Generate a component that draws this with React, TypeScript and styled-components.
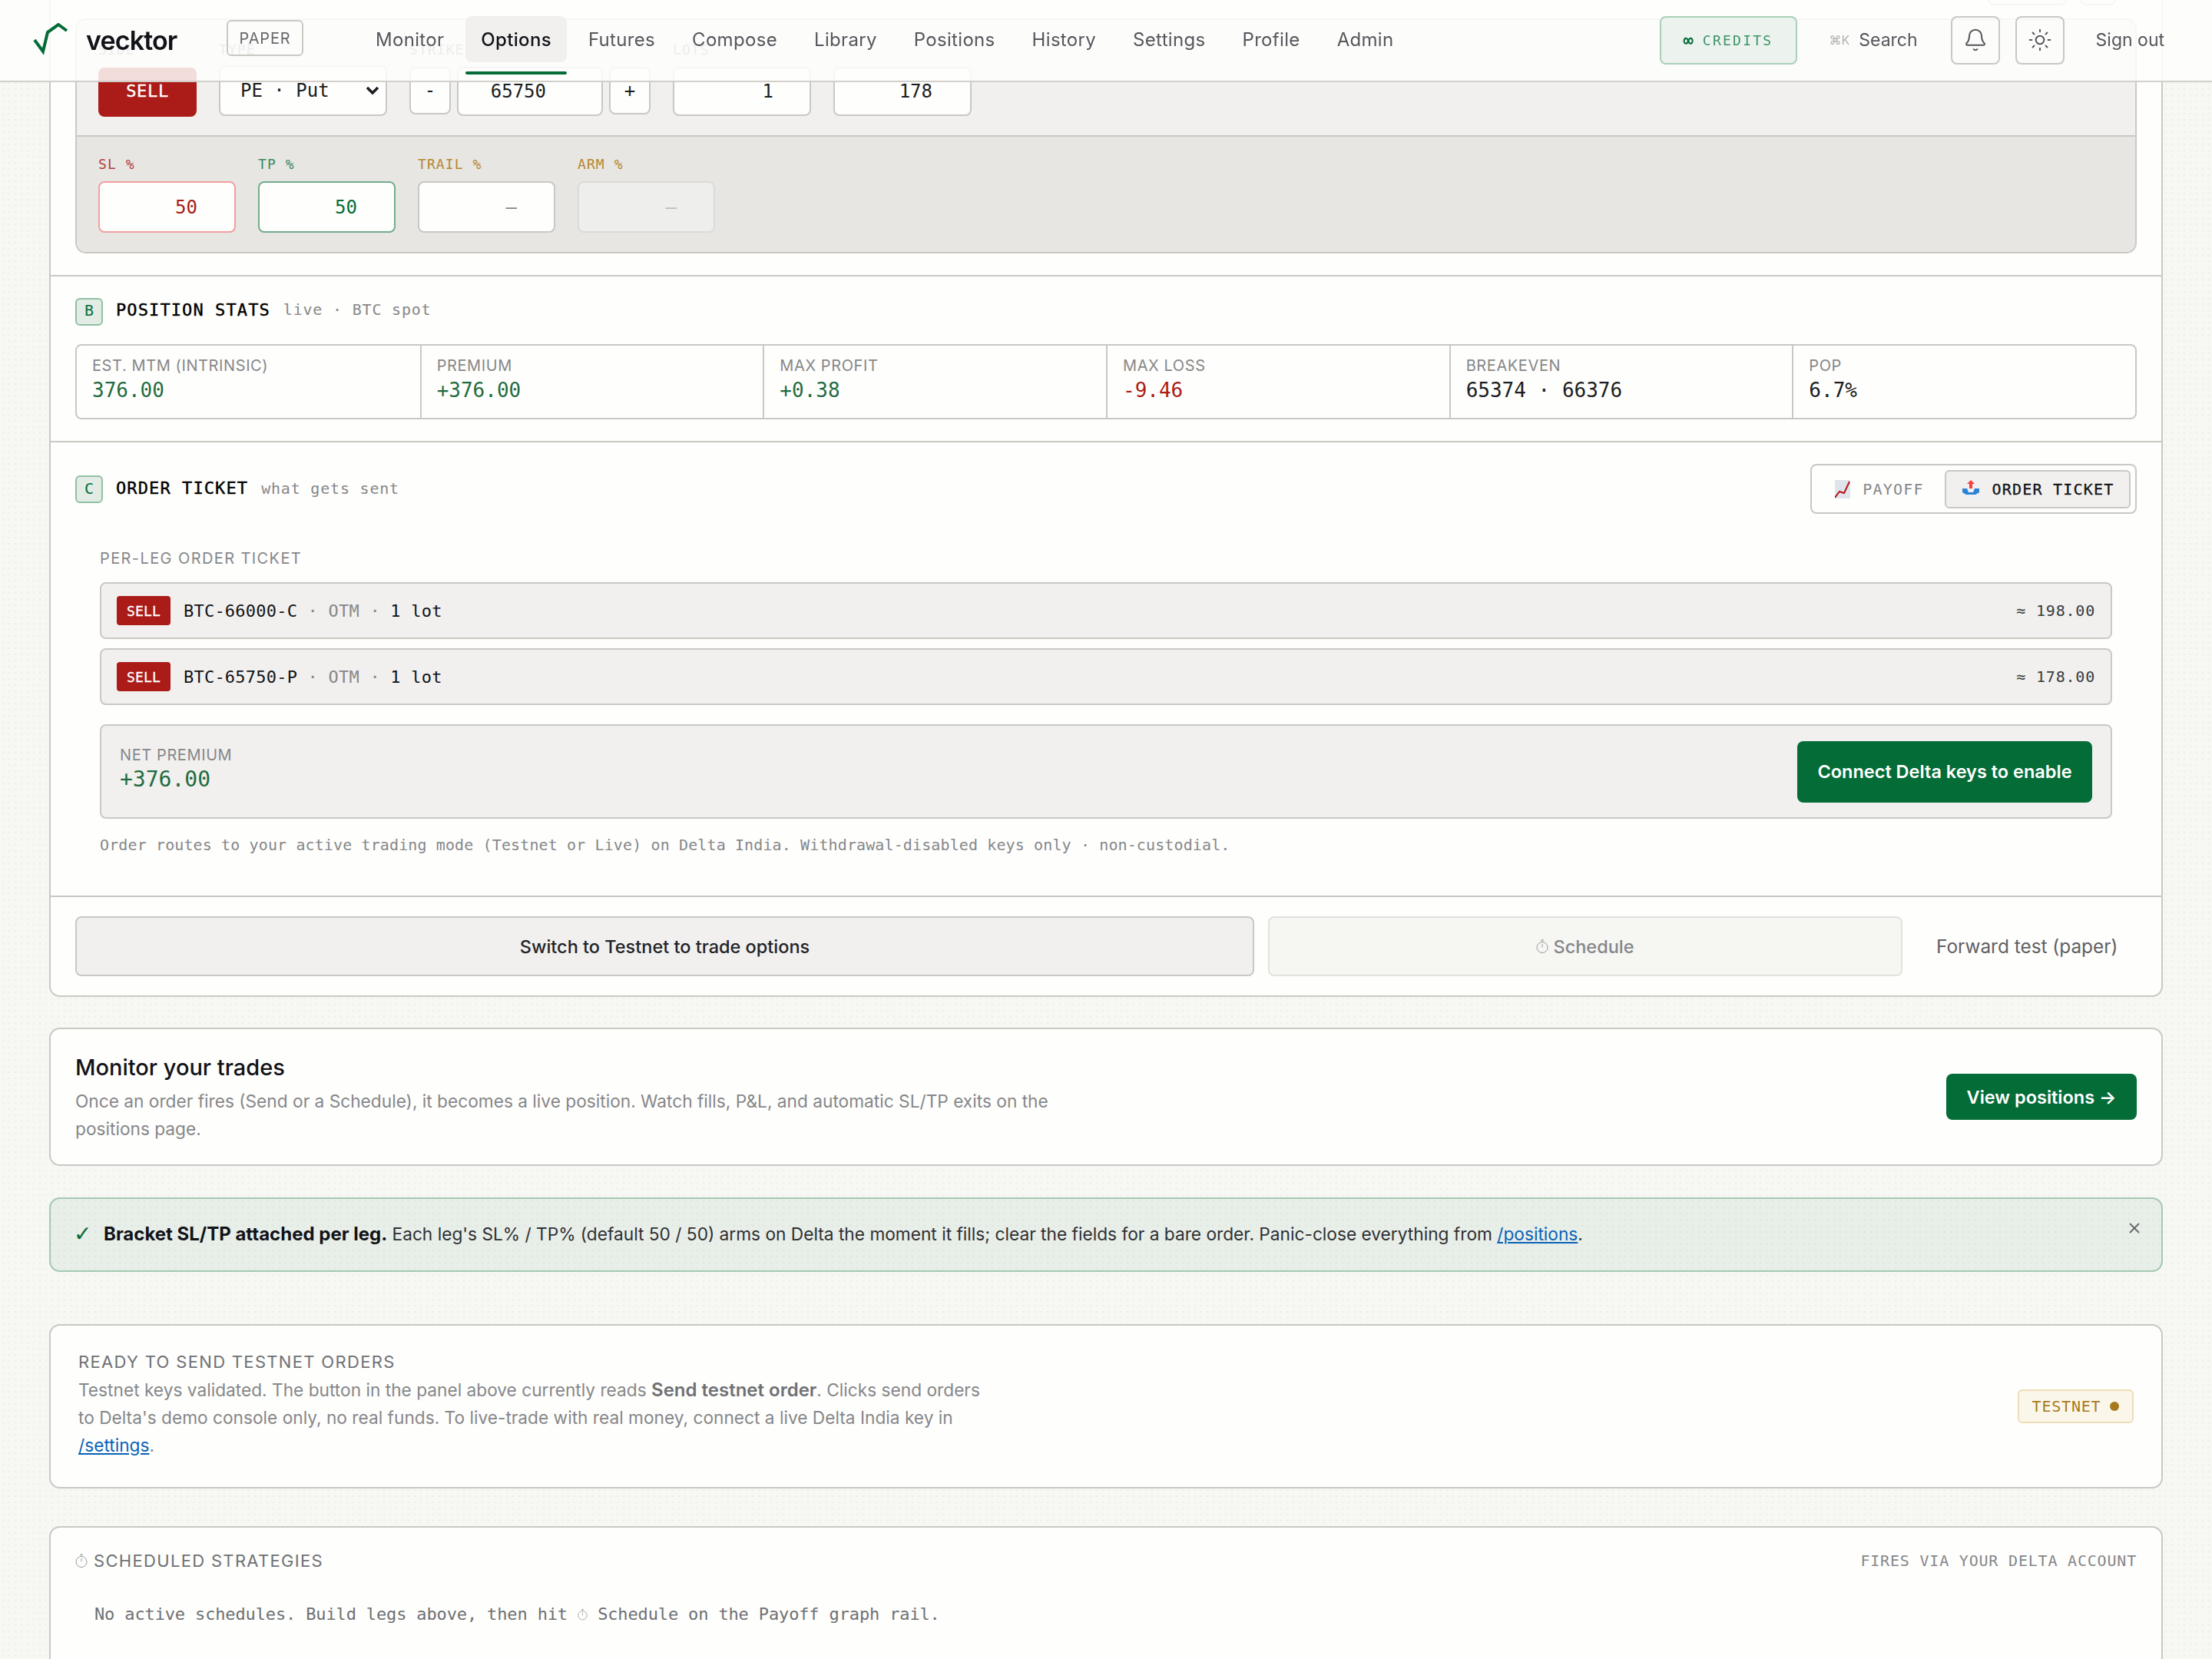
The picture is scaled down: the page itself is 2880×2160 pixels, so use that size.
import React from 'react';
import styled, { createGlobalStyle } from 'styled-components';
import { Bell, Sun, X } from 'lucide-react';

// --- Settings ---------------------------------------------------------------
const UI_FONT = '"Inter", "Liberation Sans", sans-serif';
const MONO_FONT = '"DejaVu Sans Mono", "Liberation Mono", monospace';

const GREEN = '#046c37';
const RED = '#ab1b17';
const BORDER = '#c9c8c3';
const CARD = '#fefefc';
const MUTED = '#86878a';
const INK = '#111318';
const SOFT = '#f1f0ee';

const NAV_ITEMS = ['Monitor', 'Options', 'Futures', 'Compose', 'Library', 'Positions', 'History', 'Settings', 'Profile', 'Admin'];

const STATS = [
  { label: 'Est. MTM (intrinsic)', value: '376.00', tone: 'up' },
  { label: 'Premium', value: '+376.00', tone: 'up' },
  { label: 'Max profit', value: '+0.38', tone: 'up' },
  { label: 'Max loss', value: '-9.46', tone: 'down' },
  { label: 'Breakeven', value: '65374 · 66376', tone: 'plain' },
  { label: 'POP', value: '6.7%', tone: 'plain' },
] as const;

const LEGS = [
  { symbol: 'BTC-66000-C', amount: '≈ 198.00' },
  { symbol: 'BTC-65750-P', amount: '≈ 178.00' },
];

type Tone = 'up' | 'down' | 'plain';
const toneColor = (tone: Tone) => (tone === 'up' ? '#1f6b42' : tone === 'down' ? RED : '#1b1d21');

const GlobalStyle = createGlobalStyle`
  html, body { margin: 0; padding: 0; height: 2160px; overflow: hidden; }
  body {
    font-family: ${UI_FONT};
    background-color: #f7f7f4;
    background-image: radial-gradient(circle, #eeeee9 1.2px, transparent 1.6px);
    background-size: 8px 8px;
    color: ${INK};
  }
  * { box-sizing: border-box; }
`;

// --- Top bar ----------------------------------------------------------------
const TopBar = styled.header`
  position: fixed;
  top: 0;
  left: 0;
  right: 0;
  z-index: 10;
  height: 107px;
  display: flex;
  align-items: center;
  padding: 0 62px 1px 42px;
  background: rgba(254, 254, 252, 0.86);
  border-bottom: 2px solid rgba(201, 200, 195, 0.85);
`;

const LogoMark = styled.svg`
  width: 50px;
  height: 44px;
  flex: none;
`;

const Wordmark = styled.span`
  margin-left: 20px;
  width: 119px;
  font-size: 34px;
  font-weight: 600;
  letter-spacing: -0.025em;
  color: ${INK};
`;

const ModeBadge = styled.span`
  margin: -5px 0 0 64px;
  width: 100px;
  height: 47px;
  display: flex;
  align-items: center;
  justify-content: center;
  border: 2px solid ${BORDER};
  border-radius: 6px;
  font-size: 20px;
  letter-spacing: 0.04em;
  color: #66686c;
`;

const Nav = styled.nav`
  margin-left: 74px;
  display: flex;
  gap: 8px;
`;

const NavItem = styled.a<{ $active?: boolean }>`
  position: relative;
  height: 60px;
  margin-top: -2px;
  padding: 0 20px;
  display: flex;
  align-items: center;
  border-radius: 8px;
  font-size: 24px;
  letter-spacing: 0.32px;
  font-weight: ${(p) => (p.$active ? 500 : 400)};
  color: ${(p) => (p.$active ? INK : '#55575c')};
  background: ${(p) => (p.$active ? '#f1f0ee' : 'transparent')};

  &::after {
    content: '';
    display: ${(p) => (p.$active ? 'block' : 'none')};
    position: absolute;
    left: 0;
    right: 0;
    bottom: -16px;
    height: 4px;
    border-radius: 2px;
    background: ${GREEN};
  }
`;

const BarActions = styled.div`
  margin-left: auto;
  display: flex;
  align-items: center;
`;

const CreditsChip = styled.span`
  width: 179px;
  height: 63px;
  display: flex;
  align-items: center;
  justify-content: center;
  gap: 12px;
  border: 2px solid #a9cfb8;
  border-radius: 8px;
  background: #ecf3ee;
  font-family: ${MONO_FONT};
  font-size: 18px;
  letter-spacing: 0.125em;
  color: #3d9467;
`;

const InfinityMark = styled.b`
  font-size: 22px;
  letter-spacing: 0;
  color: ${GREEN};
`;

const SearchHint = styled.span`
  margin-left: 42px;
  display: flex;
  align-items: center;
  gap: 12px;
  font-size: 23px;
  color: #55575c;
`;

const Kbd = styled.span`
  font-size: 16px;
  color: #b0b0b0;
`;

const IconButton = styled.button`
  width: 64px;
  height: 63px;
  margin-left: 20px;
  display: flex;
  align-items: center;
  justify-content: center;
  padding: 0;
  border: 2px solid ${BORDER};
  border-radius: 8px;
  background: transparent;
  color: #55575c;

  &:first-of-type {
    margin-left: 43px;
  }
`;

const SignOut = styled.span`
  margin-left: 41px;
  font-size: 23px;
  color: #55575c;
`;

// --- Page and cards ---------------------------------------------------------
const Main = styled.main`
  width: 2752px;
  margin: -100px 64px 0;
`;

const Card = styled.section<{ $gap?: number }>`
  margin-top: ${(p) => p.$gap ?? 0}px;
  background: ${CARD};
  border: 2px solid ${BORDER};
  border-radius: 14px;
`;

const Builder = styled.div`
  padding: 32px 32px 28px;
`;

const BuilderTools = styled.div`
  height: 73px;
  margin-bottom: 17px;
  padding-right: 27px;
  display: flex;
  align-items: flex-end;
  justify-content: flex-end;
  gap: 17px;
`;

const GhostTool = styled.span<{ $w: number }>`
  width: ${(p) => p.$w}px;
  height: 50px;
  border: 2px solid ${BORDER};
  border-radius: 8px;
  background: ${CARD};
`;

const LegPanel = styled.div`
  border: 2px solid ${BORDER};
  border-radius: 14px;
  overflow: hidden;
`;

const LegRow = styled.div`
  display: flex;
  gap: 29px;
  height: 150px;
  padding: 28px 28px 0;
  background: ${SOFT};
`;

const ExitRow = styled.div`
  display: flex;
  gap: 29px;
  height: 152px;
  padding: 25px 28px 0;
  background: #e7e6e3;
  border-top: 2px solid ${BORDER};
`;

const FieldColumn = styled.div`
  display: flex;
  flex-direction: column;
`;

const FieldLabel = styled.label<{ $color?: string }>`
  height: 22px;
  margin-bottom: 11px;
  font-family: ${MONO_FONT};
  font-size: 18px;
  line-height: 22px;
  letter-spacing: 0.06em;
  color: ${(p) => p.$color ?? MUTED};
`;

const SideButton = styled.button`
  width: 128px;
  height: 64px;
  margin-top: 1px;
  padding: 0 0 3px;
  border: 0;
  border-radius: 8px;
  background: ${RED};
  color: #fff;
  font-family: ${MONO_FONT};
  font-size: 22px;
  letter-spacing: 0.03em;
  -webkit-text-stroke: 0.4px #fff;
`;

const SelectBox = styled.div`
  width: 219px;
  height: 66px;
  margin-top: -2px;
  padding: 0 8px 0 26px;
  display: flex;
  align-items: center;
  justify-content: space-between;
  background: ${CARD};
  border: 2px solid ${BORDER};
  border-radius: 8px;
  font-family: ${MONO_FONT};
  font-size: 24px;
  color: #1b1d21;
`;

const StrikeGroup = styled.div`
  display: flex;
  gap: 8px;
`;

const StepButton = styled.button`
  width: 54px;
  height: 62px;
  padding: 0;
  background: ${CARD};
  border: 2px solid ${BORDER};
  border-radius: 8px;
  font-family: ${MONO_FONT};
  font-size: 24px;
  color: #1b1d21;
`;

const NumberBox = styled.div<{ $w: number; $right: number; $h?: number; $color?: string; $border?: string; $off?: boolean }>`
  width: ${(p) => p.$w}px;
  height: ${(p) => p.$h ?? 64}px;
  padding-right: ${(p) => p.$right}px;
  display: flex;
  align-items: center;
  justify-content: flex-end;
  background: ${(p) => (p.$off ? '#eeeeec' : CARD)};
  border: 2px solid ${(p) => p.$border ?? BORDER};
  border-radius: 8px;
  font-family: ${MONO_FONT};
  font-size: 24px;
  color: ${(p) => p.$color ?? '#1b1d21'};
`;

const SectionBlock = styled.div<{ $pad: string }>`
  padding: ${(p) => p.$pad};
  border-top: 2px solid ${BORDER};
`;

const SectionHead = styled.div`
  display: flex;
  align-items: center;
  justify-content: space-between;
`;

const SectionTitleGroup = styled.div`
  display: flex;
  align-items: center;
`;

const LetterBadge = styled.span<{ $lift: number }>`
  width: 36px;
  height: 36px;
  padding-bottom: ${(p) => p.$lift * 2}px;
  display: flex;
  align-items: center;
  justify-content: center;
  background: #e2ece5;
  border: 2px solid #8fc0a3;
  border-radius: 6px;
  font-family: ${MONO_FONT};
  font-size: 20px;
  color: ${GREEN};
`;

const SectionTitle = styled.span<{ $lift: number }>`
  margin-left: 17px;
  padding-bottom: ${(p) => p.$lift * 2}px;
  font-family: ${MONO_FONT};
  font-size: 22px;
  letter-spacing: 0.05em;
  color: #000;
  -webkit-text-stroke: 0.4px #000;
`;

const SectionNote = styled.span<{ $lift: number }>`
  margin-left: 17px;
  padding-bottom: ${(p) => p.$lift * 2}px;
  font-family: ${MONO_FONT};
  font-size: 20px;
  letter-spacing: 0.04em;
  color: ${MUTED};
`;

const StatGrid = styled.div`
  margin-top: 24px;
  height: 98px;
  display: grid;
  grid-template-columns: repeat(6, 1fr);
  border: 2px solid ${BORDER};
  border-radius: 8px;
`;

const StatCell = styled.div`
  padding: 14px 20px 0;
  border-left: 2px solid ${BORDER};

  &:first-child {
    border-left: 0;
  }
`;

const StatLabel = styled.div`
  font-size: 20px;
  line-height: 24px;
  letter-spacing: 0.03em;
  text-transform: uppercase;
  color: ${MUTED};
`;

const StatValue = styled.div<{ $tone: Tone }>`
  margin-top: 4px;
  font-family: ${MONO_FONT};
  font-size: 26px;
  line-height: 32px;
  color: ${(p) => toneColor(p.$tone)};
`;

const ViewTabs = styled.div`
  width: 425px;
  height: 65px;
  padding: 6px;
  display: flex;
  align-items: center;
  justify-content: space-between;
  border: 2px solid ${BORDER};
  border-radius: 8px;
`;

const ViewTab = styled.span<{ $active?: boolean }>`
  height: 50px;
  width: ${(p) => (p.$active ? '242px' : '164px')};
  display: flex;
  align-items: center;
  justify-content: center;
  gap: 16px;
  border: ${(p) => (p.$active ? `2px solid ${BORDER}` : '0')};
  border-radius: 6px;
  background: ${(p) => (p.$active ? SOFT : 'transparent')};
  font-family: ${MONO_FONT};
  font-size: 20px;
  letter-spacing: 0.06em;
  color: ${(p) => (p.$active ? INK : MUTED)};
  -webkit-text-stroke: ${(p) => (p.$active ? `0.3px ${INK}` : '0')};
`;

const Ticket = styled.div`
  padding: 0 32px;
`;

const TicketHeading = styled.div`
  margin: 46px 0 19px;
  font-size: 20px;
  line-height: 24px;
  letter-spacing: 0.07em;
  color: ${MUTED};
`;

const LegLine = styled.div`
  height: 74px;
  margin-top: 12px;
  padding: 0 20px;
  display: flex;
  align-items: center;
  background: ${SOFT};
  border: 2px solid ${BORDER};
  border-radius: 8px;
  font-family: ${MONO_FONT};
  font-size: 22px;
  letter-spacing: 0.01em;
`;

const SellTag = styled.span`
  width: 70px;
  height: 38px;
  margin-right: 17px;
  display: flex;
  align-items: center;
  justify-content: center;
  border-radius: 4px;
  background: ${RED};
  color: #fff;
  font-size: 18px;
  -webkit-text-stroke: 0.3px #fff;
`;

const LegSymbol = styled.span`
  color: ${INK};
`;

const LegDim = styled.span`
  color: ${MUTED};
`;

const LegAmount = styled.span`
  margin-left: auto;
  font-size: 20px;
  letter-spacing: 0.04em;
  color: #3a3c40;
`;

const NetBox = styled.div`
  height: 123px;
  margin-top: 25px;
  padding: 0 24px;
  display: flex;
  align-items: center;
  justify-content: space-between;
  background: ${SOFT};
  border: 2px solid ${BORDER};
  border-radius: 8px;
`;

const NetInfo = styled.div`
  margin-top: -6px;
`;

const NetLabel = styled.div`
  font-size: 20px;
  line-height: 24px;
  letter-spacing: 0.03em;
  color: ${MUTED};
`;

const NetValue = styled.div`
  margin-top: 3px;
  font-family: ${MONO_FONT};
  font-size: 28px;
  line-height: 34px;
  color: #1f6b42;
`;

const PrimaryButton = styled.button<{ $w: number; $h: number }>`
  width: ${(p) => p.$w}px;
  height: ${(p) => p.$h}px;
  padding: 0;
  flex: none;
  border: 0;
  border-radius: 8px;
  background: ${GREEN};
  color: #fff;
  font-family: ${UI_FONT};
  font-size: 23.5px;
  font-weight: 600;
`;

const TicketNote = styled.div`
  margin-top: 22px;
  font-family: ${MONO_FONT};
  font-size: 20px;
  line-height: 24px;
  letter-spacing: 0.12px;
  color: ${MUTED};
`;

const ActionBar = styled.div`
  height: 130px;
  margin-top: 54px;
  padding: 25px 32px 0;
  display: flex;
  gap: 18px;
  border-top: 2px solid ${BORDER};
`;

const ActionButton = styled.button<{ $w: number; $off?: boolean }>`
  width: ${(p) => p.$w}px;
  height: 78px;
  padding: 0;
  display: flex;
  align-items: center;
  justify-content: center;
  gap: 6px;
  border: 2px solid ${(p) => (p.$off ? '#e2e1dd' : BORDER)};
  border-radius: 8px;
  background: ${(p) => (p.$off ? '#f6f6f3' : SOFT)};
  color: ${(p) => (p.$off ? MUTED : '#222428')};
  font-family: ${UI_FONT};
  font-size: 23.5px;
  font-weight: 500;
`;

const ForwardLink = styled.span`
  flex: 1;
  height: 78px;
  padding-left: 26px;
  display: flex;
  align-items: center;
  font-size: 24.4px;
  color: #5f6165;
`;

const MonitorCard = styled(Card)`
  height: 180px;
  padding: 30px 32px 0;
  display: flex;
  justify-content: space-between;
  align-items: flex-start;
`;

const MonitorTitle = styled.div`
  font-size: 29px;
  line-height: 40px;
  font-weight: 500;
  color: ${INK};
`;

const MonitorText = styled.p`
  width: 1320px;
  margin: 6px 0 0;
  font-size: 22.7px;
  line-height: 36px;
  color: ${MUTED};
`;

const MonitorAction = styled.div`
  margin-top: 28px;
`;

const SuccessNote = styled.div`
  margin-top: 41px;
  height: 97px;
  padding: 0 24px 2px 24px;
  display: flex;
  align-items: center;
  background: rgba(4, 108, 55, 0.06);
  border: 2px solid #a3c9b2;
  border-radius: 14px;
  font-size: 22.7px;
  color: #2e3034;
`;

const CheckGlyph = styled.span`
  width: 45px;
  padding-left: 6px;
  flex: none;
  font-family: "DejaVu Sans", sans-serif;
  font-size: 28px;
  color: ${GREEN};
`;

const NoteText = styled.span`
  b {
    font-size: 24px;
    font-weight: 700;
    color: ${INK};
  }
`;

const InlineLink = styled.a`
  color: #0b62b8;
  text-decoration: underline;
`;

const DismissIcon = styled.span`
  margin: -16px 0 0 auto;
  display: flex;
  color: #66686c;
`;

const ReadyCard = styled(Card)`
  height: 214px;
  padding: 33px 36px 0;
  display: flex;
  justify-content: space-between;
  align-items: center;
`;

const ReadyBody = styled.div`
  align-self: flex-start;
  width: 1200px;
`;

const ReadyHeading = styled.div`
  font-size: 22px;
  line-height: 28px;
  letter-spacing: 0.06em;
  color: #6f7175;
`;

const ReadyText = styled.p`
  margin: 5px 0 0;
  font-size: 22.7px;
  line-height: 36px;
  color: ${MUTED};

  b {
    font-size: 24px;
    font-weight: 600;
    color: #6f7175;
  }
`;

const TestnetChip = styled.span`
  width: 151px;
  height: 44px;
  margin-top: -33px;
  display: flex;
  align-items: center;
  justify-content: center;
  gap: 12px;
  background: #fbf6ea;
  border: 2px solid #eddcb6;
  border-radius: 6px;
  font-family: ${MONO_FONT};
  font-size: 20px;
  letter-spacing: 0.04em;
  color: #a8791c;
`;

const ChipDot = styled.i`
  width: 12px;
  height: 12px;
  border-radius: 50%;
  background: #a8791c;
`;

const ScheduleCard = styled(Card)`
  height: 300px;
  padding: 29px 32px 0;
`;

const ScheduleHead = styled.div`
  display: flex;
  align-items: center;
  justify-content: space-between;
  height: 28px;
`;

const ScheduleTitle = styled.div`
  display: flex;
  align-items: center;
  gap: 8px;
  font-size: 22px;
  letter-spacing: 0.06em;
  color: #6f7175;
`;

const ScheduleRoute = styled.span`
  font-family: ${MONO_FONT};
  font-size: 20px;
  letter-spacing: 0.04em;
  color: ${MUTED};
`;

const ScheduleEmpty = styled.div`
  margin-top: 42px;
  padding-left: 25px;
  display: flex;
  align-items: center;
  font-family: ${MONO_FONT};
  font-size: 22px;
  line-height: 28px;
  letter-spacing: -0.14px;
  white-space: pre;
  color: #6e7074;
`;

// --- Small drawings ---------------------------------------------------------
function Stopwatch({ width = 16 }: { width?: number }) {
  return (
    <svg width={width} height="20" viewBox="0 0 16 20" fill="none" stroke="#9a9b9d" strokeWidth="1">
      <circle cx="8" cy="11.5" r="7" />
      <path d="M6 2h4M8 2v2.5M8 7v4.5" />
    </svg>
  );
}

function ChartEmoji() {
  return (
    <svg width="20" height="24" viewBox="0 0 20 24">
      <rect x="0" y="0" width="20" height="24" fill="#dfe5ea" />
      <path d="M0 23 L6 15 L12 17 L19 2" fill="none" stroke="#b7151b" strokeWidth="2" />
    </svg>
  );
}

function OutboxEmoji() {
  return (
    <svg width="24" height="24" viewBox="0 0 24 24">
      <path d="M1 12h22v11H1z" fill="#eef1f4" />
      <path d="M1 11h6l2 5h6l2-5h6v5l-5 3H6l-5-3z" fill="#2d83d6" />
      <path d="M12 0l5 5h-3v6h-4V5H7z" fill="#f4433f" />
    </svg>
  );
}

function Chevron() {
  return (
    <svg width="18" height="12" viewBox="0 0 18 12" fill="none" stroke="#1b1d21" strokeWidth="3.4">
      <path d="M2 2l7 7 7-7" />
    </svg>
  );
}

// --- Page -------------------------------------------------------------------
export default function App() {
  return (
    <>
      <GlobalStyle />
      <TopBar>
        <LogoMark viewBox="0 0 50 44" fill="none">
          <path d="M3 22 L14 37 L20 12 L34 2 L45 10" stroke={GREEN} strokeWidth="4" />
        </LogoMark>
        <Wordmark>vecktor</Wordmark>
        <ModeBadge>PAPER</ModeBadge>
        <Nav>
          {NAV_ITEMS.map((item) => (
            <NavItem key={item} $active={item === 'Options'}>
              {item}
            </NavItem>
          ))}
        </Nav>
        <BarActions>
          <CreditsChip>
            <InfinityMark>∞</InfinityMark>
            CREDITS
          </CreditsChip>
          <SearchHint>
            <Kbd>⌘K</Kbd>
            Search
          </SearchHint>
          <IconButton>
            <Bell size={32} strokeWidth={1.5} />
          </IconButton>
          <IconButton>
            <Sun size={32} strokeWidth={1.5} />
          </IconButton>
          <SignOut>Sign out</SignOut>
        </BarActions>
      </TopBar>

      <Main>
        <Card>
          <Builder>
            <BuilderTools>
              <GhostTool $w={103} />
              <GhostTool $w={47} />
            </BuilderTools>
            <LegPanel>
              <LegRow>
                <FieldColumn>
                  <FieldLabel>SIDE</FieldLabel>
                  <SideButton>SELL</SideButton>
                </FieldColumn>
                <FieldColumn>
                  <FieldLabel>TYPE</FieldLabel>
                  <SelectBox>
                    PE · Put
                    <Chevron />
                  </SelectBox>
                </FieldColumn>
                <FieldColumn>
                  <FieldLabel>STRIKE</FieldLabel>
                  <StrikeGroup>
                    <StepButton>-</StepButton>
                    <NumberBox $w={190} $right={72}>65750</NumberBox>
                    <StepButton>+</StepButton>
                  </StrikeGroup>
                </FieldColumn>
                <FieldColumn>
                  <FieldLabel>LOTS</FieldLabel>
                  <NumberBox $w={180} $right={47}>1</NumberBox>
                </FieldColumn>
                <FieldColumn>
                  <FieldLabel />
                  <NumberBox $w={180} $right={49}>178</NumberBox>
                </FieldColumn>
              </LegRow>
              <ExitRow>
                <FieldColumn>
                  <FieldLabel $color="#b4403c">SL %</FieldLabel>
                  <NumberBox $w={179} $h={67} $right={48} $color={RED} $border="#f0a0a0">50</NumberBox>
                </FieldColumn>
                <FieldColumn>
                  <FieldLabel $color="#3a8a63">TP %</FieldLabel>
                  <NumberBox $w={179} $h={67} $right={48} $color={GREEN} $border="#72ad8c">50</NumberBox>
                </FieldColumn>
                <FieldColumn>
                  <FieldLabel $color="#b5872f">TRAIL %</FieldLabel>
                  <NumberBox $w={179} $h={67} $right={48} $color="#86878a">—</NumberBox>
                </FieldColumn>
                <FieldColumn>
                  <FieldLabel $color="#b5872f">ARM %</FieldLabel>
                  <NumberBox $w={179} $h={67} $right={48} $color="#bdbdbb" $border="#dcdbd8" $off>—</NumberBox>
                </FieldColumn>
              </ExitRow>
            </LegPanel>
          </Builder>

          <SectionBlock $pad="28px 32px 28px">
            <SectionTitleGroup>
              <LetterBadge $lift={2}>B</LetterBadge>
              <SectionTitle $lift={3}>POSITION STATS</SectionTitle>
              <SectionNote $lift={3}>live · BTC spot</SectionNote>
            </SectionTitleGroup>
            <StatGrid>
              {STATS.map((stat) => (
                <StatCell key={stat.label}>
                  <StatLabel>{stat.label}</StatLabel>
                  <StatValue $tone={stat.tone}>{stat.value}</StatValue>
                </StatCell>
              ))}
            </StatGrid>
          </SectionBlock>

          <SectionBlock $pad="28px 32px 0">
            <SectionHead>
              <SectionTitleGroup>
                <LetterBadge $lift={1}>C</LetterBadge>
                <SectionTitle $lift={1}>ORDER TICKET</SectionTitle>
                <SectionNote $lift={1}>what gets sent</SectionNote>
              </SectionTitleGroup>
              <ViewTabs>
                <ViewTab>
                  <ChartEmoji />
                  PAYOFF
                </ViewTab>
                <ViewTab $active>
                  <OutboxEmoji />
                  ORDER TICKET
                </ViewTab>
              </ViewTabs>
            </SectionHead>
            <Ticket>
              <TicketHeading>PER-LEG ORDER TICKET</TicketHeading>
              {LEGS.map((leg) => (
                <LegLine key={leg.symbol}>
                  <SellTag>SELL</SellTag>
                  <LegSymbol>{leg.symbol}</LegSymbol>
                  <LegDim>&nbsp;·&nbsp;OTM&nbsp;·&nbsp;</LegDim>
                  <LegSymbol>1 lot</LegSymbol>
                  <LegAmount>{leg.amount}</LegAmount>
                </LegLine>
              ))}
              <NetBox>
                <NetInfo>
                  <NetLabel>NET PREMIUM</NetLabel>
                  <NetValue>+376.00</NetValue>
                </NetInfo>
                <PrimaryButton $w={384} $h={80}>Connect Delta keys to enable</PrimaryButton>
              </NetBox>
              <TicketNote>
                Order routes to your active trading mode (Testnet or Live) on Delta India. Withdrawal-disabled keys only · non-custodial.
              </TicketNote>
            </Ticket>
          </SectionBlock>

          <ActionBar>
            <ActionButton $w={1535}>Switch to Testnet to trade options</ActionButton>
            <ActionButton $w={826} $off>
              <Stopwatch />
              Schedule
            </ActionButton>
            <ForwardLink>Forward test (paper)</ForwardLink>
          </ActionBar>
        </Card>

        <MonitorCard $gap={40}>
          <div>
            <MonitorTitle>Monitor your trades</MonitorTitle>
            <MonitorText>
              Once an order fires (Send or a Schedule), it becomes a live position. Watch fills, P&amp;L, and automatic SL/TP exits on the positions page.
            </MonitorText>
          </div>
          <MonitorAction>
            <PrimaryButton $w={248} $h={60}>View positions →</PrimaryButton>
          </MonitorAction>
        </MonitorCard>

        <SuccessNote>
          <CheckGlyph>✓</CheckGlyph>
          <NoteText>
            <b>Bracket SL/TP attached per leg.</b> Each leg's SL% / TP% (default 50 / 50) arms on Delta the moment it fills; clear the fields for a bare order. Panic-close everything from <InlineLink>/positions</InlineLink>.
          </NoteText>
          <DismissIcon>
            <X size={22} strokeWidth={2} />
          </DismissIcon>
        </SuccessNote>

        <ReadyCard $gap={68}>
          <ReadyBody>
            <ReadyHeading>READY TO SEND TESTNET ORDERS</ReadyHeading>
            <ReadyText>
              Testnet keys validated. The button in the panel above currently reads <b>Send testnet order</b>. Clicks send orders to Delta's demo console only, no real funds. To live-trade with real money, connect a live Delta India key in <InlineLink>/settings</InlineLink>.
            </ReadyText>
          </ReadyBody>
          <TestnetChip>
            TESTNET
            <ChipDot />
          </TestnetChip>
        </ReadyCard>

        <ScheduleCard $gap={49}>
          <ScheduleHead>
            <ScheduleTitle>
              <Stopwatch />
              SCHEDULED STRATEGIES
            </ScheduleTitle>
            <ScheduleRoute>FIRES VIA YOUR DELTA ACCOUNT</ScheduleRoute>
          </ScheduleHead>
          <ScheduleEmpty>
            No active schedules. Build legs above, then hit <Stopwatch width={13} /> Schedule on the Payoff graph rail.
          </ScheduleEmpty>
        </ScheduleCard>
      </Main>
    </>
  );
}
